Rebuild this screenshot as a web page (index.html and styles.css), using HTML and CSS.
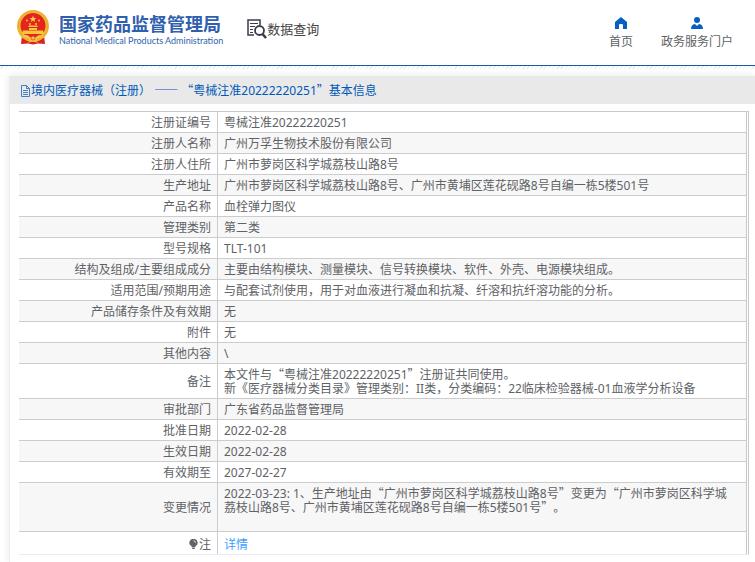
FILE: index.html
```html
<!DOCTYPE html>
<html lang="zh-CN">
<head>
  <meta charset="UTF-8">
  <meta name="viewport" content="width=device-width, initial-scale=1.0">
  <title>数据查询</title>
  <link rel="stylesheet" href="styles.css">
</head>
<body>
  <header class="header">
    <a href="#" class="logo">
      <svg class="emblem" viewBox="0 0 32 35">
        <path d="M5 25 L4 34 L11 33.500 L16 34.500 L21 33.500 L28 34 L27 25 Z" fill="#d9251c"/>
        <circle cx="16" cy="16" r="16" fill="#f0b834"/>
        <circle cx="16" cy="16" r="14.500" fill="none" stroke="#e3a62e" stroke-dasharray="2 1"/>
        <circle cx="16" cy="15.500" r="12.500" fill="#e3261d"/>
        <path d="M16 5.500 L16.900 8 L19.500 8 L17.400 9.600 L18.200 12 L16 10.500 L13.800 12 L14.600 9.600 L12.500 8 L15.100 8 Z" fill="#fbd24a"/>
        <g fill="#fbc53e">
          <circle cx="10" cy="10.500" r="1"/>
          <circle cx="22" cy="10.500" r="1"/>
          <circle cx="13" cy="14" r="1"/>
          <circle cx="19" cy="14" r="1"/>
          <path d="M11 17 L12 15.500 H20 L21 17 Z M12 18 H20 V20 H12 Z M6 20.500 H26 L27 24 H5 Z"/>
        </g>
        <path d="M5 25 Q10 24 13 27 Q16 29 19 27 Q22 24 27 25 L24 28 Q21 27 18.500 30 L21 33 L16 31 L11 33 L13.500 30 Q11 27 8 28 Z" fill="#f7c545"/>
        <circle cx="16" cy="28" r="2" fill="#f7c545" stroke="#d9251c" stroke-width="0.600"/>
      </svg>
      <span class="logo-text">
        <strong class="logo-cn">国家药品监督管理局</strong>
        <span class="logo-en">National Medical Products Administration</span>
      </span>
    </a>
    <a href="#" class="search-title">
      <svg class="search-icon" viewBox="0 0 20 20" fill="none" stroke="#3a3a4c">
        <path d="M7 16 H1 V1 H13 V6" stroke-width="1.500"/>
        <path d="M3 4.500 H11 M3 7.500 H8 M3 10.500 H6 M3 13.500 H6" stroke-width="1.200"/>
        <circle cx="12.500" cy="11.500" r="4.500" stroke-width="1.800"/>
        <path d="M15.500 15 L19 19" stroke-width="2.500"/>
      </svg>
      数据查询
    </a>
    <nav class="nav">
      <a href="#">
        <svg viewBox="0 0 12 12"><path d="M6 0 L0 5 V12 H4 V8 Q4 7 5 7 H7 Q8 7 8 8 V12 H12 V5 Z"/></svg>
        首页
      </a>
      <a href="#">
        <svg viewBox="0 0 12 12"><circle cx="6" cy="3" r="3"/><path d="M0 12 Q0 7.500 4 7 L6 9 L8 7 Q12 7.500 12 12 Z"/></svg>
        政务服务门户
      </a>
    </nav>
  </header>
  <div class="stripe"></div>

  <main class="panel">
    <h1 class="panel-title">
      <svg class="doc-icon" viewBox="0 0 11 12" fill="none" stroke="#3f7fc8">
        <path d="M1.500 0.500 H6.500 L9.500 3.500 V11.500 H1.500 Z M6.500 0.500 V3.500 H9.500 M3 5.500 H8 M3 7.500 H8 M3 9.500 H8"/>
      </svg>境内医疗器械（注册） <span class="zh">——</span> <span class="zh">“</span>粤械注准20222220251<span class="zh">”</span>基本信息
    </h1>
    <div class="table-wrap">
      <table class="info">
        <tbody>
          <tr><th scope="row">注册证编号</th><td>粤械注准20222220251</td></tr>
          <tr><th scope="row">注册人名称</th><td>广州万孚生物技术股份有限公司</td></tr>
          <tr><th scope="row">注册人住所</th><td>广州市萝岗区科学城荔枝山路8号</td></tr>
          <tr><th scope="row">生产地址</th><td>广州市萝岗区科学城荔枝山路8号、广州市黄埔区莲花砚路8号自编一栋5楼501号</td></tr>
          <tr><th scope="row">产品名称</th><td>血栓弹力图仪</td></tr>
          <tr><th scope="row">管理类别</th><td>第二类</td></tr>
          <tr><th scope="row">型号规格</th><td>TLT-101</td></tr>
          <tr><th scope="row">结构及组成/主要组成成分</th><td>主要由结构模块、测量模块、信号转换模块、软件、外壳、电源模块组成。</td></tr>
          <tr><th scope="row">适用范围/预期用途</th><td>与配套试剂使用，用于对血液进行凝血和抗凝、纤溶和抗纤溶功能的分析。</td></tr>
          <tr><th scope="row">产品储存条件及有效期</th><td>无</td></tr>
          <tr><th scope="row">附件</th><td>无</td></tr>
          <tr><th scope="row">其他内容</th><td>\</td></tr>
          <tr><th scope="row">备注</th><td>本文件与<span class="zh">“</span>粤械注准20222220251<span class="zh">”</span>注册证共同使用。<br>新《医疗器械分类目录》管理类别：II类，分类编码：22临床检验器械-01血液学分析设备</td></tr>
          <tr><th scope="row">审批部门</th><td>广东省药品监督管理局</td></tr>
          <tr><th scope="row">批准日期</th><td>2022-02-28</td></tr>
          <tr><th scope="row">生效日期</th><td>2022-02-28</td></tr>
          <tr><th scope="row">有效期至</th><td>2027-02-27</td></tr>
          <tr><th scope="row">变更情况</th><td>2022-03-23: 1、生产地址由<span class="zh">“</span>广州市萝岗区科学城荔枝山路8号<span class="zh">”</span>变更为<span class="zh">“</span>广州市萝岗区科学城荔枝山路8号、广州市黄埔区莲花砚路8号自编一栋5楼501号<span class="zh">”</span>。<br><br></td></tr>
          <tr class="note">
            <th scope="row"><svg class="bulb" viewBox="0 0 10 12"><path d="M5 0 A4.500 4.500 0 0 1 7.500 8.500 L7 10 H3 L2.500 8.500 A4.500 4.500 0 0 1 5 0 Z M3.500 10.500 H6.500 V12 H3.500 Z" fill="#606266"/><path d="M5 2 Q7 2 7.500 4.500" fill="none" stroke="#fff"/></svg>注</th>
            <td><a href="#">详情</a></td>
          </tr>
        </tbody>
      </table>
    </div>
  </main>
</body>
</html>
```

FILE: styles.css
```css
* {
  box-sizing: border-box;
}

body {
  margin: 0;
  min-height: 100vh;
  display: flex;
  flex-direction: column;
  background: #fff;
  color: #606266;
  font-family: "Noto Sans", "Noto Sans CJK SC", sans-serif;
  font-size: 12px;
  line-height: 14px;
  text-spacing-trim: space-all;
}

a {
  color: inherit;
  text-decoration: none;
}

.zh {
  font-family: "Noto Sans CJK SC", sans-serif;
  line-height: 0;
}

.header {
  display: flex;
  align-items: center;
  height: 66px;
  padding: 0 22px 0 17px;
  border-bottom: 1px solid #0f5bb0;
}

.logo {
  display: flex;
  align-items: center;
  gap: 10px;
  margin-top: -10px;
  color: #2f5fae;
}

.emblem {
  width: 32px;
  height: 35px;
}

.logo-text {
  display: flex;
  flex-direction: column;
  padding-top: 4px;
}

.logo-cn {
  font-size: 18px;
  line-height: 22px;
}

.logo-en {
  font-family: Lato, sans-serif;
  font-size: 9px;
  line-height: 12px;
}

.search-title {
  display: flex;
  align-items: center;
  margin-top: -8px;
  margin-left: 24px;
  font-size: 13px;
  color: #444;
}

.search-icon {
  width: 20px;
  height: 20px;
}

.nav {
  display: flex;
  gap: 28px;
  margin-left: auto;
}

.nav a {
  display: flex;
  flex-direction: column;
  align-items: center;
  gap: 6px;
}

.nav svg {
  width: 12px;
  height: 12px;
  fill: #0560c2;
}

.stripe {
  height: 3px;
  background: repeating-linear-gradient(135deg, #fff 0 2px, #ececec 2px 3px);
}

.panel {
  flex: 1;
  margin-top: 7px;
  margin-left: 9px;
  border-left: 1px solid #ebeef5;
  box-shadow: 0 0 8px rgba(0, 0, 0, 0.1);
}

.panel-title {
  margin: 0;
  padding: 8px 10px 5px;
  background: #e9e9e9;
  border-bottom: 1px solid #e6ebf5;
  color: #0059b8;
  font-size: 12px;
  font-weight: 400;
}

.doc-icon {
  width: 11px;
  height: 12px;
  vertical-align: -2px;
}

.table-wrap {
  margin: 7px 6px 0 9px;
  padding-right: 1px;
  border-top: 1px solid #c8c8cc;
  border-right: 1px solid #c8c8cc;
  border-bottom: 1px solid #e6ebf5;
}

.info {
  width: 100%;
  table-layout: fixed;
  border-spacing: 0;
  border-right: 1px solid #c8c8cc;
}

.info th,
.info td {
  padding: 4px 6px 2px;
  border-bottom: 1px solid #ccc;
}

.info td {
  padding-right: 10px;
}

.info th {
  width: 199px;
  border-right: 1px solid #ccc;
  font-weight: 400;
  text-align: right;
}

.info tr:nth-child(even) {
  background: #f7f7f7;
}

.info .note th,
.info .note td {
  padding-top: 6px;
  border-bottom: 0;
}

.note a {
  color: #409eff;
}

.bulb {
  width: 9px;
  height: 10px;
  margin-right: 1px;
}
```
